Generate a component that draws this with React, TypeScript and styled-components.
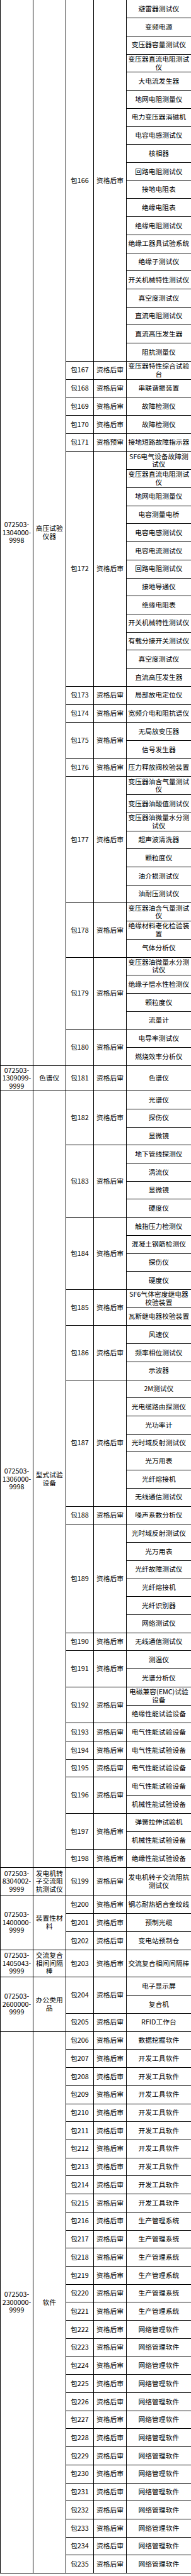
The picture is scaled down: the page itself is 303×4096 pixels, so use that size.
import React from 'react'
import styled, { createGlobalStyle } from 'styled-components'

// reference is 422px wide, everything is drawn at 0.718 of it
const SCALE = 0.718
const px = (v: number) => `${(v * SCALE).toFixed(3)}px`

const ROW_H = 40

type Pkg = { no: number; review?: string; items: string[] }
type Section = { code: string; name: string; rowHeight?: number; pkgs: Pkg[] }

const same = (from: number, to: number, item: string): Pkg[] =>
  Array.from({ length: to - from + 1 }, (_, i) => ({ no: from + i, items: [item] }))

const SECTIONS: Section[] = [
  {
    code: '072503-1304000-9998',
    name: '高压试验仪器',
    pkgs: [
      {
        no: 166,
        items: [
          '避雷器测试仪',
          '变频电源',
          '变压器容量测试仪',
          '变压器直流电阻测试仪',
          '大电流发生器',
          '地网电阻测量仪',
          '电力变压器消磁机',
          '电容电感测试仪',
          '核相器',
          '回路电阻测试仪',
          '接地电阻表',
          '绝缘电阻表',
          '绝缘电阻测试仪',
          '绝缘工器具试验系统',
          '绝缘子测试仪',
          '开关机械特性测试仪',
          '真空度测试仪',
          '直流电阻测试仪',
          '直流高压发生器',
          '阻抗测量仪',
        ],
      },
      { no: 167, items: ['变压器特性综合试验台'] },
      { no: 168, items: ['串联谐振装置'] },
      { no: 169, items: ['故障检测仪'] },
      { no: 170, items: ['故障检测仪'] },
      { no: 171, review: '资格预审', items: ['接地短路故障指示器'] },
      {
        no: 172,
        items: [
          'SF6电气设备故障测试仪',
          '变压器直流电阻测试仪',
          '地网电阻测量仪',
          '电容测量电桥',
          '电容电感测试仪',
          '电容电流测试仪',
          '回路电阻测试仪',
          '接地导通仪',
          '绝缘电阻表',
          '开关机械特性测试仪',
          '有载分接开关测试仪',
          '真空度测试仪',
          '直流高压发生器',
        ],
      },
      { no: 173, items: ['局部放电定位仪'] },
      { no: 174, items: ['宽频介电和阻抗谱仪'] },
      { no: 175, items: ['无局放变压器', '信号发生器'] },
      { no: 176, items: ['压力释放阀校验装置'] },
      {
        no: 177,
        items: [
          '变压器油含气量测试仪',
          '变压器油酸值测试仪',
          '变压器油微量水分测试仪',
          '超声波清洗器',
          '颗粒度仪',
          '油介损测试仪',
          '油耐压测试仪',
        ],
      },
      { no: 178, items: ['变压器油含气量测试仪', '绝缘材料老化检验装置', '气体分析仪'] },
      { no: 179, items: ['变压器油微量水分测试仪', '绝缘子憎水性检测仪', '颗粒度仪', '流量计'] },
      { no: 180, items: ['电导率测试仪', '燃烧效率分析仪'] },
    ],
  },
  {
    code: '072503-1309099-9999',
    name: '色谱仪',
    rowHeight: 56,
    pkgs: [{ no: 181, items: ['色谱仪'] }],
  },
  {
    code: '072503-1306000-9998',
    name: '型式试验设备',
    pkgs: [
      { no: 182, items: ['光谱仪', '探伤仪', '显微镜'] },
      { no: 183, items: ['地下管线探测仪', '涡流仪', '显微镜', '硬度仪'] },
      { no: 184, items: ['触指压力检测仪', '混凝土钢筋检测仪', '探伤仪', '硬度仪'] },
      { no: 185, items: ['SF6气体密度继电器校验装置', '瓦斯继电器校验装置'] },
      { no: 186, items: ['风速仪', '频率相位测试仪', '示波器'] },
      {
        no: 187,
        items: ['2M测试仪', '光电缆路由探测仪', '光功率计', '光时域反射测试仪', '光万用表', '光纤熔接机', '无线通信测试仪'],
      },
      { no: 188, items: ['噪声系数分析仪'] },
      {
        no: 189,
        items: ['光时域反射测试仪', '光万用表', '光纤故障测试仪', '光纤熔接机', '光纤识别器', '网络测试仪'],
      },
      { no: 190, items: ['无线通信测试仪'] },
      { no: 191, items: ['测温仪', '光谱分析仪'] },
      { no: 192, items: ['电磁兼容(EMC)试验设备', '绝缘性能试验设备'] },
      ...same(193, 195, '电气性能试验设备'),
      { no: 196, items: ['电气性能试验设备', '机械性能试验设备'] },
      { no: 197, items: ['弹簧拉伸试验机', '机械性能试验设备'] },
      { no: 198, items: ['绝缘性能试验设备'] },
    ],
  },
  {
    code: '072503-8304002-9999',
    name: '发电机转子交流阻抗测试仪',
    rowHeight: 62,
    pkgs: [{ no: 199, items: ['发电机转子交流阻抗测试仪'] }],
  },
  {
    code: '072503-1400000-9999',
    name: '装置性材料',
    pkgs: [
      { no: 200, items: ['钢芯耐热铝合金绞线'] },
      { no: 201, items: ['预制光缆'] },
      { no: 202, items: ['变电站预制仓'] },
    ],
  },
  {
    code: '072503-1405043-9999',
    name: '交流复合相间间隔棒',
    rowHeight: 61,
    pkgs: [{ no: 203, items: ['交流复合相间间隔棒'] }],
  },
  {
    code: '072503-2600000-9999',
    name: '办公类用品',
    pkgs: [
      { no: 204, items: ['电子显示屏', '复合机'] },
      { no: 205, items: ['RFID工作台'] },
    ],
  },
  {
    code: '072503-2300000-9999',
    name: '软件',
    pkgs: [
      { no: 206, items: ['数据挖掘软件'] },
      ...same(207, 215, '开发工具软件'),
      ...same(216, 221, '生产管理系统'),
      ...same(222, 235, '网络管理软件'),
    ],
  },
]

const COLUMNS = [72.3, 72, 62, 72, 143.7]

const GlobalStyle = createGlobalStyle`
  html, body {
    margin: 0;
    padding: 0;
    background: #fff;
  }
  body {
    font-family: 'Noto Sans CJK SC', 'Noto Sans', sans-serif;
    color: #000;
  }
`

const Sheet = styled.table`
  width: ${px(422)};
  border-collapse: collapse;
  table-layout: fixed;
  font-size: ${px(15)};
  line-height: ${px(17.6)};
`

const Col = styled.col<{ $w: number }>`
  width: ${(p) => px(p.$w)};
`

const Row = styled.tr<{ $h: number }>`
  height: ${(p) => px(p.$h)};
`

const Cell = styled.td`
  border: 1px solid #000;
  padding: 0 1px;
  text-align: center;
  vertical-align: middle;
  word-break: break-all;
  ${Row}:first-child > & {
    border-top: none;
  }
`

const CodeLine = styled.span`
  display: block;
  white-space: nowrap;
`

const CodeText = ({ code }: { code: string }) => {
  const parts = code.split('-')
  return (
    <>
      {parts.map((part, i) => (
        <CodeLine key={`code_${code}_${i}`}>{i < parts.length - 1 ? `${part}-` : part}</CodeLine>
      ))}
    </>
  )
}

const App: React.FC = () => {
  const rows: React.ReactNode[] = []

  SECTIONS.forEach((section) => {
    const span = section.pkgs.reduce((sum, pkg) => sum + pkg.items.length, 0)
    section.pkgs.forEach((pkg, pkgIndex) => {
      pkg.items.forEach((item, itemIndex) => {
        const sectionStart = pkgIndex === 0 && itemIndex === 0
        rows.push(
          <Row key={`row_${pkg.no}_${itemIndex}`} $h={section.rowHeight ?? ROW_H}>
            {sectionStart && (
              <>
                <Cell rowSpan={span}>
                  <CodeText code={section.code} />
                </Cell>
                <Cell rowSpan={span}>{section.name}</Cell>
              </>
            )}
            {itemIndex === 0 && (
              <>
                <Cell rowSpan={pkg.items.length}>包{pkg.no}</Cell>
                <Cell rowSpan={pkg.items.length}>{pkg.review ?? '资格后审'}</Cell>
              </>
            )}
            <Cell>{item}</Cell>
          </Row>,
        )
      })
    })
  })

  return (
    <>
      <GlobalStyle />
      <Sheet>
        <colgroup>
          {COLUMNS.map((w, i) => (
            <Col key={`col_${i}`} $w={w} />
          ))}
        </colgroup>
        <tbody>{rows}</tbody>
      </Sheet>
    </>
  )
}

export default App
